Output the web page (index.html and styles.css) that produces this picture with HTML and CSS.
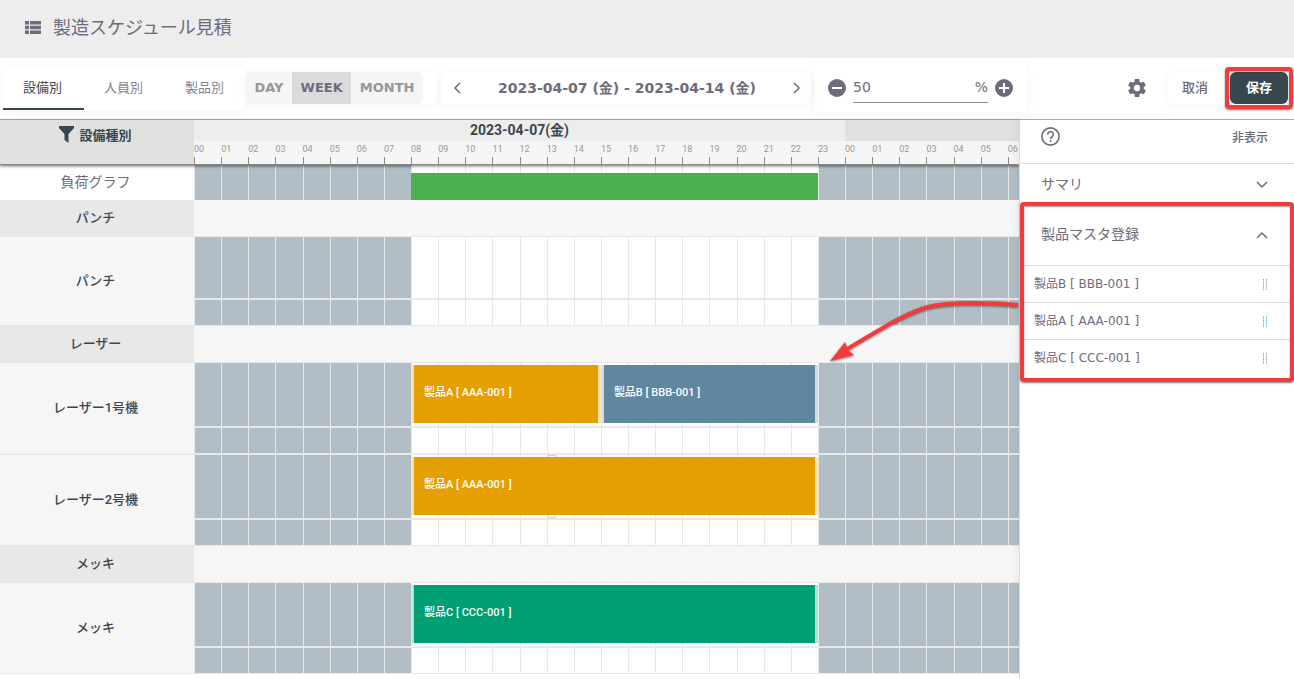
FILE: index.html
```html
<!DOCTYPE html>
<html lang="ja">
<head>
  <meta charset="UTF-8">
  <meta name="viewport" content="width=device-width, initial-scale=1.0">
  <title>製造スケジュール見積</title>
  <link rel="stylesheet" href="styles.css">
</head>
<body>
  <header class="page-header">
    <svg class="icon-list" viewBox="0 0 16 13"><path d="M0 0h4v3.5H0zM5 0h11v3.5H5zM0 4.7h4v3.5H0zM5 4.7h11v3.5H5zM0 9.4h4v3.5H0zM5 9.4h11v3.5H5z"/></svg>
    <h1>製造スケジュール見積</h1>
  </header>

  <div class="toolbar">
    <nav class="tabs">
      <button type="button" class="active">設備別</button>
      <button type="button">人員別</button>
      <button type="button">製品別</button>
    </nav>

    <div class="range-card">
      <div class="range">
        <button type="button">DAY</button>
        <button type="button" class="active">WEEK</button>
        <button type="button">MONTH</button>
      </div>
    </div>

    <div class="period">
      <button type="button" aria-label="前へ"><svg viewBox="0 0 8 12"><path d="M7 1L2 6l5 5"/></svg></button>
      <span>2023-04-07 (金) - 2023-04-14 (金)</span>
      <button type="button" aria-label="次へ"><svg viewBox="0 0 8 12"><path d="M1 1l5 5-5 5"/></svg></button>
    </div>

    <div class="scale">
      <button type="button" aria-label="縮小"><svg viewBox="0 0 18 18"><circle cx="9" cy="9" r="9"/><path d="M4 9h10"/></svg></button>
      <div class="scale-field">
        <input type="text" id="scale" value="50" aria-label="表示倍率">
        <label for="scale">%</label>
      </div>
      <button type="button" aria-label="拡大"><svg viewBox="0 0 18 18"><circle cx="9" cy="9" r="9"/><path d="M4 9h10M9 4v10"/></svg></button>
    </div>

    <div class="actions">
      <button type="button" class="settings" aria-label="設定">
        <svg viewBox="2 2 20 20"><path d="M12 15.5A3.5 3.5 0 0 1 8.5 12 3.5 3.5 0 0 1 12 8.500a3.500 3.500 0 0 1 3.500 3.500 3.500 3.500 0 0 1-3.500 3.500m7.430-2.530c.04-.32.07-.64.07-.97s-.03-.66-.07-1l2.110-1.630c.19-.15.24-.42.12-.64l-2-3.460c-.12-.22-.39-.31-.61-.22l-2.490 1c-.52-.39-1.060-.73-1.690-.98l-.37-2.650A.506.506 0 0 0 14 2h-4c-.25 0-.46.18-.5.42l-.37 2.650c-.63.25-1.170.59-1.690.98l-2.490-1c-.22-.09-.49 0-.61.22l-2 3.460c-.13.22-.07.49.12.64L4.570 11c-.04.34-.07.67-.07 1s.03.65.07.97l-2.110 1.660c-.19.15-.25.42-.12.64l2 3.460c.12.22.39.3.61.22l2.490-1.010c.52.4 1.060.74 1.690.99l.37 2.650c.04.24.25.42.5.42h4c.25 0 .46-.18.5-.42l.37-2.650c.63-.26 1.170-.59 1.690-.99l2.490 1.010c.22.08.49 0 .61-.22l2-3.460c.12-.22.07-.49-.12-.64z"/></svg>
      </button>
      <button type="button" class="cancel">取消</button>
      <div class="save-mark mark">
        <button type="button" class="save">保存</button>
      </div>
    </div>
  </div>

  <main>
    <section class="schedule">
      <div class="row head">
        <div class="label">
          <svg viewBox="0 0 15 17"><path d="M0 0h15v2L9.500 8v9L5.500 14V8L0 2z"/></svg>
          設備種別
        </div>
        <div class="track">
          <div class="days">
            <div class="day">2023-04-07(金)</div>
            <div class="day next"></div>
          </div>
          <div class="hours"></div>
        </div>
      </div>

      <div class="row load">
        <div class="label">負荷グラフ</div>
        <div class="track">
          <div class="lane">
            <div class="items"><div class="load-bar"></div></div>
          </div>
        </div>
      </div>

      <div class="row group">
        <div class="label">パンチ</div>
        <div class="track"></div>
      </div>
      <div class="row machine">
        <div class="label">パンチ</div>
        <div class="track">
          <div class="lane empty"></div>
          <div class="lane sub"></div>
        </div>
      </div>

      <div class="row group">
        <div class="label">レーザー</div>
        <div class="track"></div>
      </div>
      <div class="row machine">
        <div class="label">レーザー1号機</div>
        <div class="track">
          <div class="lane">
            <div class="items">
              <div class="task orange from-8 to-15">製品A [ AAA-001 ]</div>
              <div class="task blue from-15 to-23">製品B [ BBB-001 ]</div>
            </div>
          </div>
          <div class="lane sub"></div>
        </div>
      </div>
      <div class="row machine">
        <div class="label">レーザー2号機</div>
        <div class="track">
          <div class="lane">
            <div class="items">
              <div class="now"></div>
              <div class="task orange from-8 to-23">製品A [ AAA-001 ]</div>
            </div>
          </div>
          <div class="lane sub"></div>
        </div>
      </div>

      <div class="row group">
        <div class="label">メッキ</div>
        <div class="track"></div>
      </div>
      <div class="row machine last">
        <div class="label">メッキ</div>
        <div class="track">
          <div class="lane">
            <div class="items">
              <div class="task green from-8 to-23">製品C [ CCC-001 ]</div>
            </div>
          </div>
          <div class="lane sub"></div>
        </div>
      </div>
    </section>

    <aside>
      <div class="aside-top">
        <button type="button" aria-label="ヘルプ"><svg class="icon-help" viewBox="0 0 19 19"><circle cx="9.5" cy="9.5" r="8.600"/><path d="M6.700 7.500a2.800 2.800 0 1 1 4.600 2.100c-1 .8-1.800 1.200-1.800 2.500M9.500 13.300v1.700"/></svg></button>
        <button type="button" class="hide">非表示</button>
      </div>
      <button type="button" class="panel-title">
        サマリ
        <svg viewBox="0 0 12 8"><path d="M1 1l5 5 5-5"/></svg>
      </button>
      <div class="products mark">
        <button type="button" class="panel-title open">
          製品マスタ登録
          <svg viewBox="0 0 12 8"><path d="M1 7l5-5 5 5"/></svg>
        </button>
        <ul>
          <li>製品B [ BBB-001 ]<span class="grip"></span></li>
          <li>製品A [ AAA-001 ]<span class="grip"></span></li>
          <li>製品C [ CCC-001 ]<span class="grip"></span></li>
        </ul>
        <svg class="arrow" viewBox="0 0 192 70">
          <path class="shaft" d="M190 11C150 8 120 8 100 13C75 20 50 37 14 58"/>
          <path class="tip" d="M2 67L17 48l3 8 6 5z"/>
        </svg>
      </div>
    </aside>
  </main>

  <script>
    // 稼働時間は 8:00 - 23:00
    const OPEN = 8;
    const CLOSE = 23;
    const DAY_WIDTH = 651;

    const hours = document.querySelector('.hours');
    const lanes = document.querySelectorAll('.lane');

    // 画面幅に入る時間数だけ描画する
    function drawHours() {
      const count = Math.ceil(hours.parentElement.clientWidth / (DAY_WIDTH / 24));

      hours.innerHTML = '';
      for (let i = 0; i < count; i++) {
        const hour = document.createElement('span');
        hour.textContent = String(i % 24).padStart(2, '0');
        hours.appendChild(hour);
      }

      lanes.forEach(lane => {
        const old = lane.querySelector('.cells');
        if (old) old.remove();

        const cells = document.createElement('div');
        cells.className = 'cells';
        for (let i = 0; i < count; i++) {
          const cell = document.createElement('i');
          if (i % 24 < OPEN || i % 24 >= CLOSE) cell.className = 'off';
          cells.appendChild(cell);
        }
        lane.prepend(cells);
      });
    }

    drawHours();
    window.addEventListener('resize', drawHours);
  </script>
</body>
</html>
```
FILE: styles.css
```css
:root {
  --text: #6e6b7b;
  --dark: #36474f;
  --line: #e8e8e8;
  --off: #b1bec6;
  --red: #f23c3c;
  --day: 651px;
}

* {
  box-sizing: border-box;
  margin: 0;
  padding: 0;
}

body {
  font-family: "DejaVu Sans", "Noto Sans CJK JP", sans-serif;
  font-size: 13px;
  color: var(--text);
  background-color: #fff;
  display: flex;
  flex-direction: column;
  min-height: 100vh;
  overflow-x: hidden;
}

button {
  font: inherit;
  color: inherit;
  background: none;
  border: none;
  cursor: pointer;
}

svg {
  display: block;
  fill: currentColor;
}

/* header */
.page-header {
  display: flex;
  align-items: center;
  gap: 12px;
  height: 58px;
  padding: 0 25px 4px;
  background-color: #ededed;
}

.page-header h1 {
  padding-bottom: 2px;
  font-size: 18px;
  font-weight: 400;
}

.icon-list {
  width: 16px;
  height: 13px;
}

/* toolbar */
.toolbar {
  display: flex;
  align-items: center;
  height: 62px;
  padding: 0 6px 2px 3px;
  border-bottom: 1px solid #b0b0b0;
}

.tabs {
  display: flex;
  height: 44px;
  border-radius: 6px;
  box-shadow: 0 2px 12px rgba(0, 0, 0, 0.05);
}

.tabs button {
  width: 81px;
  padding-right: 2px;
  border-bottom: 2px solid transparent;
  color: #85838f;
}

.tabs button.active {
  color: var(--dark);
  border-color: var(--dark);
}

.range-card,
.period,
.scale,
.cancel {
  border-radius: 6px;
  box-shadow: 0 2px 12px rgba(0, 0, 0, 0.05);
}

.range-card {
  width: 191px;
  margin-right: 4px;
}

.range {
  display: flex;
  width: 177px;
  height: 32px;
  background-color: #f5f5f5;
  border-radius: 6px;
}

.range button {
  flex: 1 0 auto;
  font-weight: bold;
  color: #969699;
}

.range button.active {
  background-color: #dadadf;
  color: var(--text);
}

.period {
  display: flex;
  align-items: center;
  justify-content: space-between;
  width: 370px;
  height: 32px;
  padding: 0 10px 0 12px;
  font-size: 14px;
  font-weight: bold;
}

.period span {
  padding-bottom: 2px;
}

.period svg {
  width: 8px;
  height: 12px;
}

.period svg,
.panel-title svg {
  fill: none;
  stroke: currentColor;
  stroke-width: 1.5;
}

.scale {
  display: flex;
  align-items: center;
  gap: 7px;
  height: 48px;
  margin-left: 3px;
  padding: 0 14px;
}

.scale svg {
  width: 18px;
  height: 18px;
}

.scale path {
  stroke: #fff;
  stroke-width: 2;
}

.scale-field {
  display: flex;
  align-items: center;
  width: 135px;
  height: 31px;
  border-bottom: 1px solid #8a8a94;
  font-size: 14px;
}

.scale-field input {
  flex: 1;
  min-width: 0;
  font: inherit;
  color: inherit;
  border: none;
  outline: none;
}

.actions {
  display: flex;
  align-items: center;
  height: 32px;
  margin-left: auto;
}

.settings svg {
  width: 18px;
  height: 18px;
}

.cancel {
  width: 62px;
  height: 32px;
  margin-left: 22px;
  padding: 0 8px 2px 0;
  font-weight: 500;
}

.save {
  display: block;
  width: 58px;
  height: 32px;
  padding-bottom: 2px;
  border-radius: 6px;
  background-color: var(--dark);
  color: #fff;
  font-weight: bold;
}

/* red frames */
.mark {
  position: relative;
}

.mark::after {
  content: "";
  position: absolute;
  inset: -5px;
  border: 4px solid var(--red);
  border-radius: 4px;
  box-shadow: 0 1px 2px rgba(0, 0, 0, 0.5), inset 0 1px 2px rgba(0, 0, 0, 0.4);
  pointer-events: none;
}

.products.mark::after {
  inset: -2px 0 -6px 0;
}

/* schedule */
main {
  flex: 1;
  display: flex;
}

.schedule {
  flex: 1;
  min-width: 0;
}

.row {
  display: flex;
}

.label {
  flex: none;
  display: flex;
  align-items: center;
  justify-content: center;
  width: 194px;
  padding: 0 3px 4px 0;
  font-family: Roboto, "Noto Sans CJK JP", sans-serif;
  font-weight: 500;
  color: #3d4650;
}

.track {
  flex: 1;
  min-width: 0;
  overflow: hidden;
}

.head {
  position: relative;
  z-index: 1;
  height: 45px;
  border-bottom: 1px solid #8c8c8c;
  box-shadow: 0 1px 3px rgba(0, 0, 0, 0.6);
}

.head .label {
  gap: 5px;
  padding-bottom: 16px;
  background-color: #e0e0df;
  font-weight: bold;
  color: var(--dark);
}

.head .label svg {
  width: 15px;
  height: 17px;
}

.days {
  display: flex;
  height: 21px;
}

.day {
  flex: none;
  width: var(--day);
  background-color: #ededed;
  font: bold 14px/21px Roboto, "Noto Sans CJK JP", sans-serif;
  text-align: center;
  color: #3d4650;
}

.day.next {
  flex: 1;
  background-color: #e0e0df;
}

.hours,
.cells,
.items {
  display: grid;
  grid-auto-flow: column;
  grid-auto-columns: calc(var(--day) / 24);
}

.hours {
  height: 23px;
  background-color: #f5f5f5;
}

.hours span {
  font: 9px/17px Roboto, sans-serif;
  color: #999;
  background: linear-gradient(#8c8c8c, #8c8c8c) left bottom / 1px 7px no-repeat;
}

.lane {
  position: relative;
  height: 63px;
}

.lane.empty {
  height: 61px;
}

.lane.sub {
  height: 27px;
  border-top: 2px solid var(--line);
}

.cells {
  height: 100%;
}

.cells i {
  border-left: 1px solid var(--line);
}

.cells .off {
  background-color: var(--off);
}

.items {
  position: absolute;
  top: 0;
  left: 0;
  height: 100%;
  grid-template-columns: repeat(24, calc(var(--day) / 24));
}

.load .label {
  font-size: 14px;
  font-weight: 400;
  color: var(--text);
}

.load .lane {
  height: 35px;
}

.load-bar {
  grid-column: 9 / 24;
  align-self: end;
  height: 27px;
  background-color: #4caf50;
}

.group {
  height: 38px;
}

.load + .group {
  height: 37px;
}

.group .label {
  background-color: #e8e8e8;
}

.group .track {
  background-color: #f6f6f6;
  border: solid var(--line);
  border-width: 1px 0;
}

.load + .group .track {
  border-top: none;
}

.machine .label {
  background-color: #f6f6f6;
}

.machine + .machine {
  border-top: 2px solid var(--line);
}

.last {
  border-bottom: 1px solid var(--line);
}

.task {
  grid-row: 1;
  height: 58px;
  margin: 2px 0 0 1px;
  padding-left: 10px;
  border: solid;
  border-width: 0 3px 0 2px;
  background-clip: padding-box;
  font: 500 11px/55px Roboto, "Noto Sans CJK JP", sans-serif;
  color: #fff;
  white-space: nowrap;
}

.from-8 { grid-column-start: 9; }
.from-15 { grid-column-start: 16; }
.to-15 { grid-column-end: 16; }
.to-23 { grid-column-end: 24; }

.orange {
  background-color: #e69f00;
  border-color: #f8e2b3;
}

.blue {
  background-color: #5f87a0;
  border-color: #d5dbe0;
}

.green {
  background-color: #009e73;
  border-color: #b3e2d5;
}

.now {
  grid-row: 1;
  grid-column: 14;
  width: 9px;
  border: 1px solid #b3e2d5;
}

/* side panel */
aside {
  position: relative;
  z-index: 2;
  width: 275px;
  background-color: #fff;
  border-left: 1px solid #dcdcdc;
  box-shadow: -2px 0 8px rgba(0, 0, 0, 0.06);
}

.aside-top {
  display: flex;
  align-items: center;
  justify-content: space-between;
  height: 44px;
  padding: 0 26px 10px 21px;
  border-bottom: 1px solid #e0e0e0;
}

.icon-help {
  width: 19px;
  height: 19px;
  fill: none;
  stroke: currentColor;
  stroke-width: 1.6;
}

.hide {
  font-size: 12px;
  font-weight: 500;
}

.panel-title {
  display: flex;
  align-items: center;
  justify-content: space-between;
  width: 100%;
  height: 40px;
  padding: 0 26px 2px 21px;
  font-size: 14px;
}

.panel-title svg {
  width: 12px;
  height: 8px;
  margin-top: 4px;
}

.panel-title.open {
  height: 61px;
  padding-bottom: 4px;
}

.products li {
  display: flex;
  align-items: center;
  justify-content: space-between;
  height: 37px;
  padding: 0 27px 4px 14px;
  border-top: 1px solid #e0e0e0;
  font-size: 12px;
}

.grip {
  width: 4px;
  height: 11px;
  margin-top: 4px;
  background:
    linear-gradient(90deg, transparent 1px, #fff 1px 3px, transparent 3px),
    repeating-linear-gradient(#6fb0c8 0 1px, #d5e8ee 1px 2px);
}

.arrow {
  position: absolute;
  top: 90px;
  right: 100%;
  width: 192px;
  height: 70px;
  filter: drop-shadow(0 1px 1px rgba(0, 0, 0, 0.5));
}

.arrow .shaft {
  fill: none;
  stroke: var(--red);
  stroke-width: 4;
}

.arrow .tip {
  fill: var(--red);
}
```
